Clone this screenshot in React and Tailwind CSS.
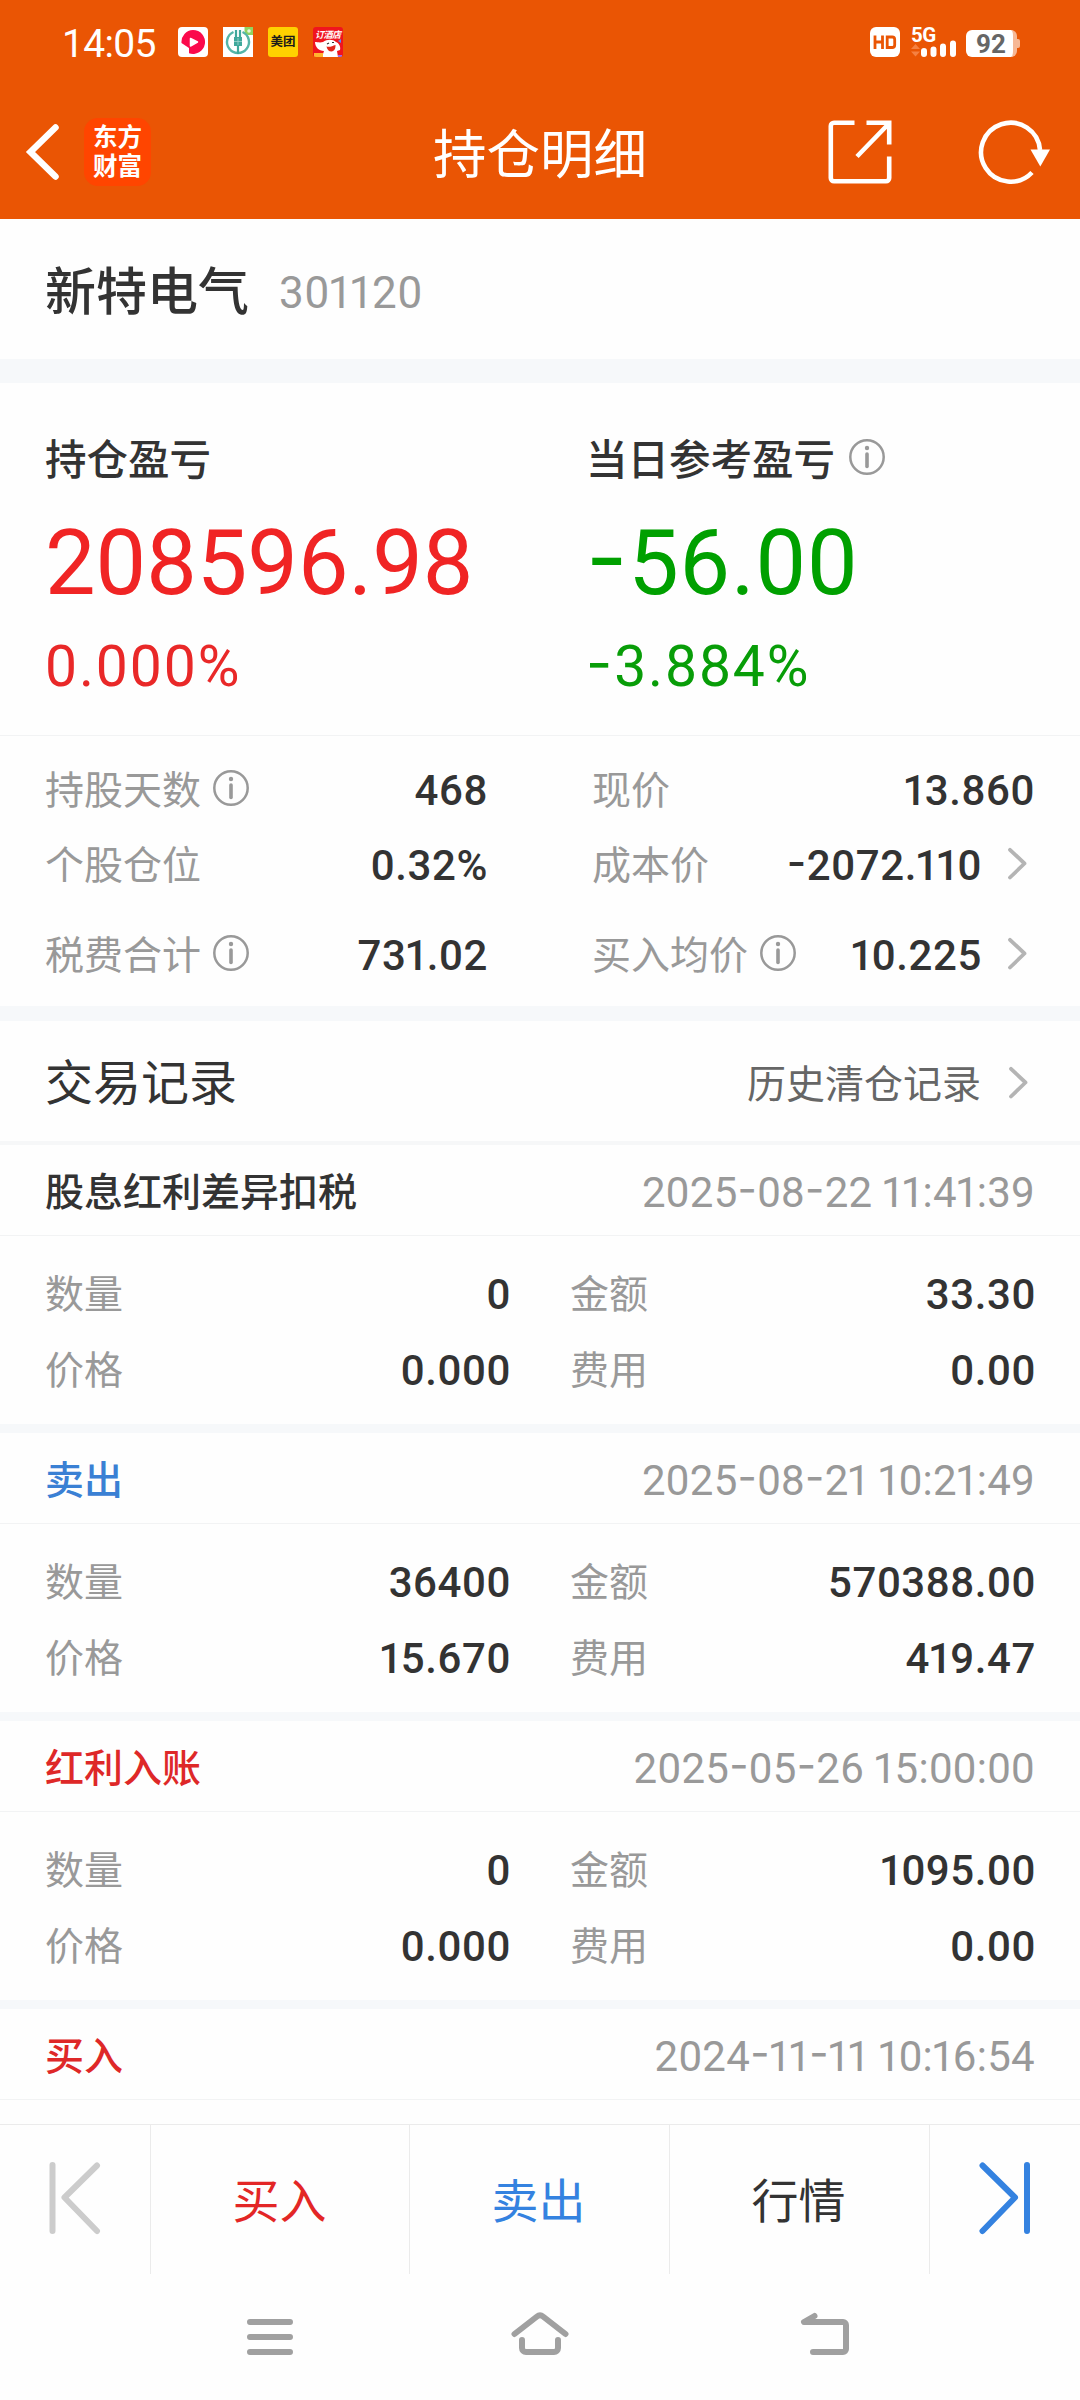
import React from 'react';

const records = [
  { type: '股息红利差异扣税', color: 'text-[#333333]', time: '2025-08-22 11:41:39', count: '0', amount: '33.30', price: '0.000', fee: '0.00' },
  { type: '卖出', color: 'text-[#3a80d4]', time: '2025-08-21 10:21:49', count: '36400', amount: '570388.00', price: '15.670', fee: '419.47' },
  { type: '红利入账', color: 'text-[#de2828]', time: '2025-05-26 15:00:00', count: '0', amount: '1095.00', price: '0.000', fee: '0.00' },
];

// Roboto digits are tabular and its hyphen is short, so tighten every 1 and widen the dash
const Num = ({ children }) =>
  children.split(/([-1])/).map((part, idx) => {
    if (part === '1') return <span key={idx} className="mx-[-0.05em]">1</span>;
    if (part === '-') return <span key={idx} className="align-[0.06em] font-['Inter'] leading-[0]">-</span>;
    return part;
  });

const InfoIcon = ({ className = '' }) => (
  <svg className={`h-9 w-9 shrink-0 text-[#999999] ${className}`} viewBox="0 0 36 36" fill="none" stroke="currentColor">
    <circle cx="18" cy="18" r="16.7" strokeWidth="2.5" />
    <circle cx="18" cy="9" r="2.2" fill="currentColor" stroke="none" />
    <path d="M18 15v12.5" strokeWidth="3.6" strokeLinecap="round" />
  </svg>
);

const Chevron = ({ className = '' }) => (
  <svg className={`ml-[25px] mr-[6px] h-9 w-5 shrink-0 ${className}`} viewBox="0 0 20 36" fill="none" stroke="#b4b4b4" strokeWidth="3.8" strokeLinecap="round" strokeLinejoin="round">
    <path d="M3 2.8 17.500 16.500 3 30.5" />
  </svg>
);

const StatusBar = () => (
  <div className="flex h-[88px] items-center pl-[62px] pr-[60px]">
    <span className="w-[116px] text-[39px] leading-none tracking-[-0.7px]">14:05</span>
    <div className="mt-[-4px] flex gap-[15px]">
      <svg className="h-[30px] w-[30px]" viewBox="0 0 30 30">
        <rect width="30" height="30" rx="4" fill="#fff" />
        <path d="M15 3a12 12 0 1 1-4 23.3V21L3.500 16A12 12 0 0 1 15 3z" fill="#fb0a4c" />
        <path d="M12.500 11.500 19.500 15l-7 4z" fill="#fff" stroke="#fff" strokeWidth="1.500" strokeLinejoin="round" />
      </svg>
      <svg className="h-[30px] w-[30px]" viewBox="0 0 30 30">
        <rect width="30" height="30" fill="#fff" />
        <path d="M21.500 0H30v8h-5a4 4 0 0 1-3.500-4z" fill="#8fd461" />
        <circle cx="26" cy="4" r="1.800" fill="#e6f6dc" />
        <path d="M10.500 5a11 11 0 1 0 9 0" fill="none" stroke="#55b5a8" strokeWidth="2.400" />
        <path d="M13 3v8M17 3v8M15 18v9" fill="none" stroke="#3fa89b" strokeWidth="2.200" />
        <path d="M11 10h8v9h-8z" fill="#3fa89b" />
        <path d="M15 11v7M11 14.500h8" stroke="#9fd6cf" strokeWidth="0.800" />
      </svg>
      <div className="flex h-[30px] w-[30px] items-center justify-center rounded-[3px] bg-[#ffd100] text-[12.500px] font-bold leading-none text-[#1a1a1a]">美团</div>
      <div className="relative h-[30px] w-[30px] overflow-hidden rounded-[3px] bg-[#f0141e]">
        <span className="absolute left-[2px] top-[4px] whitespace-nowrap text-[9px] font-bold italic leading-none tracking-[-0.5px]">订酒店</span>
        <svg className="absolute inset-0" viewBox="0 0 30 30">
          <path d="M2 15c2 0 5 1 8 0 4-3 10-3 13 0 3 1 5 5 4 8l-3 1 1 6H9l2-6c-5 0-9-4-9-9z" fill="#fff" />
          <path d="M13.500 19.500c3 1 6-.5 9-1.500 0 4-1 6-4 6.500-2.500 0-4.500-2-5-5z" fill="#e1251b" />
          <path d="m14 17 2-1M19 15.500h2" stroke="#333" strokeWidth="1.200" />
          <path d="M1 26h9v4H1z" fill="#ffb52e" />
          <path d="m25 14 3-2v4z" fill="#5b8cf5" />
          <path d="M25 28h4v2h-4z" fill="#9a6be8" />
        </svg>
      </div>
    </div>
    <div className="ml-auto mt-[-4px] flex items-center">
      <svg className="h-[30px] w-[30px]" viewBox="0 0 30 30">
        <rect width="30" height="30" rx="6" fill="#fff" />
        <path d="M5 8.500v13.500M12.500 8.500v13.500M5 15h7.500M17.200 10h5a2.500 2.500 0 0 1 2.500 2.500v5.500a2.500 2.500 0 0 1-2.500 2.500h-5z" fill="none" stroke="#ea5504" strokeWidth="2.800" />
      </svg>
      <div className="relative ml-[10px] h-[30px] w-[47px]">
        <span className="absolute left-[1px] top-[-1px] text-[20.500px] font-bold leading-[18px] tracking-[-0.5px]">5G</span>
        <svg className="absolute inset-0" viewBox="0 0 47 30">
          <path d="m5.500 17 4.500 5H1zM5.500 29.500 1 24.500h9z" fill="#f58142" />
          <path d="M14 24v3M23.500 22.500v4.500M33 19.500v7.500M43 16.500v10.500" stroke="#fff" strokeWidth="6" strokeLinecap="round" />
        </svg>
      </div>
      <div className="ml-[9px] mt-[3px] flex items-center">
        <div className="flex h-[27px] w-[51px] items-center rounded-[6px] border-r-4 border-[#f6b795] bg-white pl-[10px] text-[26px] font-bold leading-none text-[#666666]">92</div>
        <div className="h-[9px] w-[3px] rounded-r-[2px] bg-[#f6b795]"></div>
      </div>
    </div>
  </div>
);

const TitleBar = () => (
  <div className="grid h-[131px] grid-cols-[1fr_auto_1fr] items-center pb-[3px]">
    <div className="flex items-center">
      <svg className="ml-[24px] h-[60px] w-[40px]" viewBox="0 0 40 60" fill="none" stroke="#fff" strokeWidth="6.500" strokeLinecap="round">
        <path d="M31.500 5.500 6.500 30l25 24.500" />
      </svg>
      <div className="ml-[20px] flex h-[68px] w-[67px] items-center justify-center rounded-[14px] bg-[#ff4500] text-[24.500px] font-bold leading-[29px]">
        <p>东方<br />财富</p>
      </div>
    </div>
    <h1 className="pt-[7px] text-[53.500px] leading-none">持仓明细</h1>
    <div className="flex items-center justify-end">
      <svg className="h-[64px] w-[64px]" viewBox="0 0 64 64" fill="none" stroke="#fff" strokeWidth="4.600">
        <path d="M26.500 2.800H6A3.200 3.200 0 0 0 2.800 6v52A3.200 3.200 0 0 0 6 61.200h52A3.200 3.200 0 0 0 61.200 58V36.500M38.500 2.800h22.700V24.500M60.500 4 29 36.500" />
      </svg>
      <svg className="ml-[86px] mr-[28px] h-[66px] w-[74px]" viewBox="0 0 74 66" fill="none">
        <path d="M62 31A29.500 29.500 0 1 0 54 53.500" stroke="#fff" strokeWidth="4.600" />
        <path d="M52.500 30.500H72L62.300 47.500z" fill="#fff" />
      </svg>
    </div>
  </div>
);

const Stat = ({ label, value, info, link }) => (
  <div className="flex items-center">
    <span className="pt-[3px] text-[39px] text-[#999999]">{label}</span>
    {info && <InfoIcon className="ml-[12px] mt-[-4px]" />}
    <span className="ml-auto mr-[-2px] pt-[2px] text-[42px] font-medium tracking-[0.6px]"><Num>{value}</Num></span>
    {link && <Chevron className="ml-[27px] mt-[-1px]" />}
  </div>
);

const RecordHeader = ({ type, color, time }) => (
  <div className="flex h-[91px] items-center justify-between border-b border-[#f2f3f4] px-[45px] pt-[5px]">
    <span className={`pt-[2px] text-[39px] font-medium ${color}`}>{type}</span>
    <span className="text-[42px] tracking-[0.3px] text-[#999999]"><Num>{time}</Num></span>
  </div>
);

const Record = ({ record }) => (
  <div className="h-[288px] border-b-[9px] border-[#f6f8fa]">
    <RecordHeader {...record} />
    <div className="grid grid-cols-[464px_464px] grid-rows-[76px_76px] gap-x-[61px] pl-[45px] pt-[20px]">
      <Stat label="数量" value={record.count} />
      <Stat label="金额" value={record.amount} />
      <Stat label="价格" value={record.price} />
      <Stat label="费用" value={record.fee} />
    </div>
  </div>
);

const App = () => {
  return (
    <div className="flex h-[2400px] w-[1080px] flex-col overflow-hidden bg-[#fefefe] font-['Roboto','Noto_Sans_CJK_SC',sans-serif] leading-none text-[#333333]">
      <header className="h-[219px] shrink-0 bg-[#ea5504] text-white">
        <StatusBar />
        <TitleBar />
      </header>

      <main className="h-[1905px] overflow-hidden">
        <section className="flex h-[164px] items-center border-b-[24px] border-[#f6f8fa] px-[45px] pt-[7px]">
          <h2 className="text-[51px] font-medium">新特电气</h2>
          <span className="ml-[30px] text-[44px] tracking-[0.7px] text-[#999999]"><Num>301120</Num></span>
        </section>

        <section className="grid h-[353px] grid-cols-[541px_1fr] border-b border-[#f2f3f4] pl-[45px]">
          <div>
            <div className="mt-[57px] flex h-[42px] items-center text-[41.500px] font-medium">持仓盈亏</div>
            <div className="mt-[37px] text-[90px] text-[#f02424]">208596.98</div>
            <div className="mt-[29px] text-[57px] tracking-[1.900px] text-[#e92828]">0.000%</div>
          </div>
          <div>
            <div className="mt-[57px] flex h-[42px] items-center text-[41.500px] font-medium">
              当日参考盈亏
              <InfoIcon className="ml-[14px] mt-[-9px]" />
            </div>
            <div className="mt-[37px] text-[90px] tracking-[0.8px] text-[#00a000]"><Num>-56.00</Num></div>
            <div className="mt-[29px] text-[57px] tracking-[1.900px] text-[#089d08]"><Num>-3.884%</Num></div>
          </div>
        </section>

        <section className="grid h-[285px] grid-cols-[441px_441px] grid-rows-[75px_76px_104px] gap-x-[106px] border-b-[15px] border-[#f6f8fa] pl-[45px] pt-[16px]">
          <Stat label="持股天数" value="468" info />
          <Stat label="现价" value="13.860" />
          <Stat label="个股仓位" value="0.32%" />
          <Stat label="成本价" value="-2072.110" link />
          <Stat label="税费合计" value="731.02" info />
          <Stat label="买入均价" value="10.225" info link />
        </section>

        <section>
          <div className="flex h-[124px] items-center border-b-4 border-[#f6f7f8] pl-[45px] pr-[46px]">
            <h3 className="pt-[6px] text-[48px]">交易记录</h3>
            <span className="ml-auto mr-[2px] pt-[9px] text-[39px] text-[#666666]">历史清仓记录</span>
            <Chevron className="mt-[6px]" />
          </div>
          {records.map((record, idx) => (
            <Record key={idx} record={record} />
          ))}
          <RecordHeader type="买入" color="text-[#de2828]" time="2024-11-11 10:16:54" />
        </section>
      </main>

      <nav className="grid h-[150px] shrink-0 grid-cols-[151px_259px_260px_260px_150px] border-t border-[#ebebeb] text-[47px]">
        <button className="flex items-center justify-center border-r border-[#ebebeb] pb-[3px] pr-[2px]">
          <svg className="h-[76px] w-[54px]" viewBox="0 0 54 76" fill="none" stroke="#cccccc" strokeWidth="6" strokeLinecap="round" strokeLinejoin="round">
            <path d="M5.500 5v66M50 5.500 17.500 37.500 50 71" />
          </svg>
        </button>
        <button className="border-r border-[#ebebeb] pr-[1px] pt-[4px] text-[#e32626]">买入</button>
        <button className="border-r border-[#ebebeb] pr-[2px] pt-[4px] text-[#3482e0]">卖出</button>
        <button className="border-r border-[#ebebeb] pr-[2px] pt-[4px]">行情</button>
        <button className="flex items-center justify-center pb-[3px]">
          <svg className="h-[76px] w-[54px]" viewBox="0 0 54 76" fill="none" stroke="#3482e0" strokeWidth="6" strokeLinecap="round" strokeLinejoin="round">
            <path d="M49 5v66M4.500 5.500 37 37.500 4.500 71" />
          </svg>
        </button>
      </nav>

      <footer className="flex h-[126px] shrink-0 items-start pl-[240px] pt-[30px]">
        <svg className="h-[60px] w-[60px]" viewBox="0 0 60 60" fill="none" stroke="#a0a0a0" strokeWidth="6" strokeLinecap="round">
          <path d="M10 18h40M10 33h40M10 48h40" />
        </svg>
        <svg className="ml-[210px] h-[60px] w-[60px]" viewBox="0 0 60 60" fill="none" stroke="#a0a0a0" strokeWidth="6" strokeLinecap="round" strokeLinejoin="round">
          <path d="M4.500 30 27 12.500Q30 10 33 12.500L55.500 30M12 36v8a4 4 0 0 0 4 4h28a4 4 0 0 0 4-4v-8" />
        </svg>
        <svg className="ml-[226px] h-[60px] w-[60px]" viewBox="0 0 60 60" fill="none" stroke="#a0a0a0" strokeWidth="6" strokeLinecap="round" strokeLinejoin="round">
          <path d="M18.500 12 8 18h39a3 3 0 0 1 3 3v24a3 3 0 0 1-3 3H17" />
        </svg>
      </footer>
    </div>
  );
};

export default App;
